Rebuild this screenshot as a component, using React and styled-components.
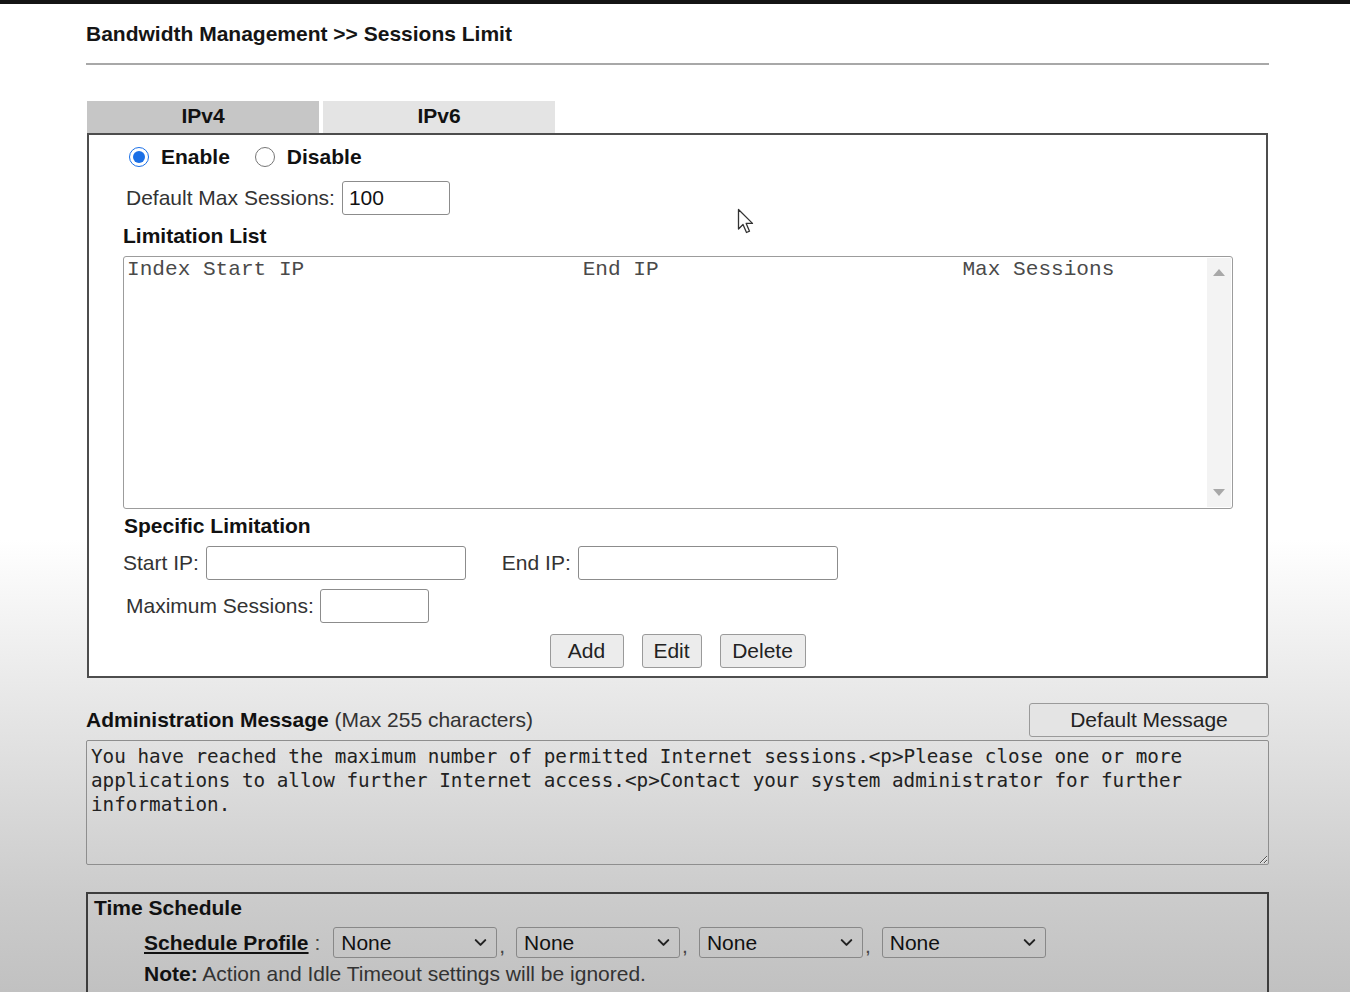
import styled, { createGlobalStyle } from 'styled-components';
import { ChevronDown } from 'lucide-react';

const GlobalStyle = createGlobalStyle`
  html, body {
    margin: 0;
    padding: 0;
    height: 100%;
    overflow: hidden;
  }
  body {
    font-family: "Liberation Sans", Arial, sans-serif;
    color: #111;
  }
`;

const listHeader =
  'Index Start IP'.padEnd(36) + 'End IP'.padEnd(30) + 'Max Sessions';

const adminText =
  'You have reached the maximum number of permitted Internet sessions.<p>Please close one or more applications to allow further Internet access.<p>Contact your system administrator for further information.';

const App = () => {
  return (
    <Page>
      <GlobalStyle />
      <TopBar />
      <Content>
        <Title>Bandwidth Management &gt;&gt; Sessions Limit</Title>
        <Rule />

        <Tabs>
          <Tab $active>IPv4</Tab>
          <Tab>IPv6</Tab>
        </Tabs>

        <Panel>
          <RadioRow>
            <RadioLabel>
              <Radio type='radio' name='mode' defaultChecked />
              Enable
            </RadioLabel>
            <RadioLabel>
              <Radio type='radio' name='mode' />
              Disable
            </RadioLabel>
          </RadioRow>

          <FieldRow $indent={3} $top={7}>
            <Label>Default Max Sessions:</Label>
            <TextInput $width={108} defaultValue='100' />
          </FieldRow>

          <SectionTitle $top={9}>Limitation List</SectionTitle>
          <ListBox>
            <ListBody>{listHeader}</ListBody>
            <ScrollTrack>
              <Arrow $up />
              <Arrow />
            </ScrollTrack>
          </ListBox>

          <SectionTitle $top={5} $indent={1}>Specific Limitation</SectionTitle>
          <FieldRow $top={8}>
            <Label>Start IP:</Label>
            <TextInput $width={260} />
            <Label $left={36}>End IP:</Label>
            <TextInput $width={260} />
          </FieldRow>
          <FieldRow $indent={3} $top={9}>
            <Label $gap={6}>Maximum Sessions:</Label>
            <TextInput $width={109} />
          </FieldRow>

          <ButtonRow>
            <Button $width={74}>Add</Button>
            <Button $width={60}>Edit</Button>
            <Button $width={86}>Delete</Button>
          </ButtonRow>
        </Panel>

        <AdminHeader>
          <span>
            <strong>Administration Message</strong>
            <Muted> (Max 255 characters)</Muted>
          </span>
          <DefaultButton>Default Message</DefaultButton>
        </AdminHeader>
        <MessageArea defaultValue={adminText} spellCheck={false} />

        <ScheduleBox>
          <strong>Time Schedule</strong>
          <ScheduleRow>
            <ProfileLink>Schedule Profile</ProfileLink>
            <Sep $right={13}>&nbsp;:</Sep>
            {[0, 1, 2, 3].map((i) => (
              <SelectGroup key={i}>
                <SelectBox>
                  <span>None</span>
                  <ChevronDown size={19} strokeWidth={2.6} color='#222' />
                </SelectBox>
                {i < 3 && <Sep $left={2} $right={11}>,</Sep>}
              </SelectGroup>
            ))}
          </ScheduleRow>
          <NoteRow>
            <strong>Note:</strong>
            <Muted> Action and Idle Timeout settings will be ignored.</Muted>
          </NoteRow>
        </ScheduleBox>
      </Content>

      <Cursor width='18' height='27' viewBox='0 0 18 27'>
        <path
          d='M1.5 1.5 L1.5 21 L6 16.5 L9.5 24.5 L12.5 23.2 L9.2 15.4 L15.5 15.4 Z'
          fill='#fff'
          stroke='#333'
          strokeWidth='1.3'
          strokeLinejoin='round'
        />
      </Cursor>
    </Page>
  );
};

const Page = styled.div`
  position: relative;
  height: 100vh;
  overflow: hidden;
  background: linear-gradient(
    to bottom,
    #ffffff 0px,
    #ffffff 540px,
    #ededed 660px,
    #dcdcdc 780px,
    #cbcbcb 900px,
    #c1c1c1 992px
  );
`;

const TopBar = styled.div`
  height: 4px;
  background: #141414;
`;

const Content = styled.div`
  margin-left: 86px;
  width: 1183px;
  font-size: 21px;
  line-height: 24px;
`;

const Title = styled.div`
  padding-top: 18px;
  font-weight: bold;
  color: #151515;
`;

const Rule = styled.div`
  margin-top: 17px;
  height: 2px;
  background: #a8a8a8;
`;

const Tabs = styled.div`
  display: flex;
  gap: 4px;
  margin-top: 36px;
  padding-left: 1px;
`;

const Tab = styled.div`
  width: 232px;
  height: 32px;
  padding-bottom: 2px;
  box-sizing: border-box;
  display: flex;
  align-items: center;
  justify-content: center;
  font-weight: bold;
  background: ${(p) => (p.$active ? '#c6c6c6' : '#e4e4e4')};
  color: #111;
`;

const Panel = styled.div`
  border: 2px solid #4d4d4d;
  background: #fff;
  padding: 5px 0 8px 34px;
  margin-left: 1px;
  margin-right: 1px;
`;

const RadioRow = styled.div`
  display: flex;
  align-items: center;
  gap: 25px;
  height: 34px;
  padding-left: 6px;
`;

const RadioLabel = styled.label`
  display: flex;
  align-items: center;
  gap: 12px;
  font-weight: bold;
  color: #111;
`;

const Radio = styled.input`
  width: 20px;
  height: 20px;
  margin: 0;
  accent-color: #1a6fe6;
`;

const FieldRow = styled.div`
  display: flex;
  align-items: center;
  margin-top: ${(p) => p.$top || 0}px;
  padding-left: ${(p) => p.$indent || 0}px;
`;

const Label = styled.span`
  color: #333;
  margin-left: ${(p) => p.$left || 0}px;
  margin-right: ${(p) => (p.$gap != null ? p.$gap : 7)}px;
`;

const TextInput = styled.input`
  box-sizing: border-box;
  width: ${(p) => p.$width}px;
  height: 34px;
  border: 1px solid #8c8c8c;
  border-radius: 3px;
  padding: 0 6px;
  font-family: "Liberation Sans", Arial, sans-serif;
  font-size: 21px;
  color: #111;
  background: #fff;
  outline: none;
`;

const SectionTitle = styled.div`
  font-weight: bold;
  color: #111;
  margin-top: ${(p) => p.$top || 0}px;
  padding-left: ${(p) => p.$indent || 0}px;
`;

const ListBox = styled.div`
  display: flex;
  box-sizing: border-box;
  height: 253px;
  width: 1110px;
  margin-top: 8px;
  border: 1px solid #9c9c9c;
  border-radius: 3px;
  background: #fff;
`;

const ListBody = styled.div`
  flex: 1;
  padding: 0 3px;
  font-family: "Liberation Mono", "Courier New", monospace;
  font-size: 21.1px;
  line-height: 24px;
  white-space: pre;
  color: #4a4a4a;
`;

const ScrollTrack = styled.div`
  width: 24px;
  background: #f3f3f3;
  display: flex;
  flex-direction: column;
  justify-content: space-between;
  align-items: center;
  padding: 11px 0 11px;
  margin: 1px 1px 1px 0;
`;

const Arrow = styled.div`
  width: 0;
  height: 0;
  border-left: 6px solid transparent;
  border-right: 6px solid transparent;
  ${(p) =>
    p.$up
      ? 'border-bottom: 7px solid #a8a8a8;'
      : 'border-top: 7px solid #a8a8a8;'}
`;

const ButtonRow = styled.div`
  display: flex;
  justify-content: center;
  gap: 18px;
  margin-top: 11px;
  margin-left: -34px;
`;

const Button = styled.button`
  box-sizing: border-box;
  width: ${(p) => p.$width}px;
  height: 34px;
  padding: 0;
  border: 1px solid #9a9a9a;
  border-radius: 3px;
  background: #ececec;
  font-family: "Liberation Sans", Arial, sans-serif;
  font-size: 21px;
  color: #222;
`;

const AdminHeader = styled.div`
  display: flex;
  justify-content: space-between;
  align-items: center;
  margin-top: 25px;
  color: #111;
`;

const Muted = styled.span`
  color: #333;
  font-weight: normal;
`;

const DefaultButton = styled.button`
  box-sizing: border-box;
  width: 240px;
  height: 34px;
  border: 1px solid #9a9a9a;
  border-radius: 3px;
  background: #e4e4e4;
  font-family: "Liberation Sans", Arial, sans-serif;
  font-size: 21px;
  color: #222;
`;

const MessageArea = styled.textarea`
  display: block;
  box-sizing: border-box;
  width: 100%;
  height: 125px;
  margin-top: 3px;
  padding: 4px 4px;
  border: 1px solid #8e8e8e;
  border-radius: 2px;
  background: transparent;
  font-family: "DejaVu Sans Mono", monospace;
  font-size: 19.3px;
  line-height: 24px;
  color: #222;
  outline: none;
  resize: vertical;
`;

const ScheduleBox = styled.div`
  margin-top: 27px;
  border: 2px solid #3d3d3d;
  padding: 2px 6px 8px;
  color: #111;
`;

const ScheduleRow = styled.div`
  display: flex;
  align-items: center;
  padding-left: 50px;
  margin-top: 7px;
`;

const ProfileLink = styled.span`
  font-weight: bold;
  text-decoration: underline;
  color: #111;
`;

const Sep = styled.span`
  color: #444;
  margin-left: ${(p) => p.$left || 0}px;
  margin-right: ${(p) => p.$right || 0}px;
`;

const SelectGroup = styled.div`
  display: flex;
  align-items: flex-end;
`;

const SelectBox = styled.div`
  box-sizing: border-box;
  width: 164px;
  height: 31px;
  display: flex;
  align-items: center;
  justify-content: space-between;
  padding: 0 6px 0 7px;
  border: 1px solid #888;
  border-radius: 3px;
  color: #111;
`;

const NoteRow = styled.div`
  padding-left: 50px;
  margin-top: 4px;
`;

const Cursor = styled.svg`
  position: absolute;
  left: 737px;
  top: 208px;
`;

export default App;
